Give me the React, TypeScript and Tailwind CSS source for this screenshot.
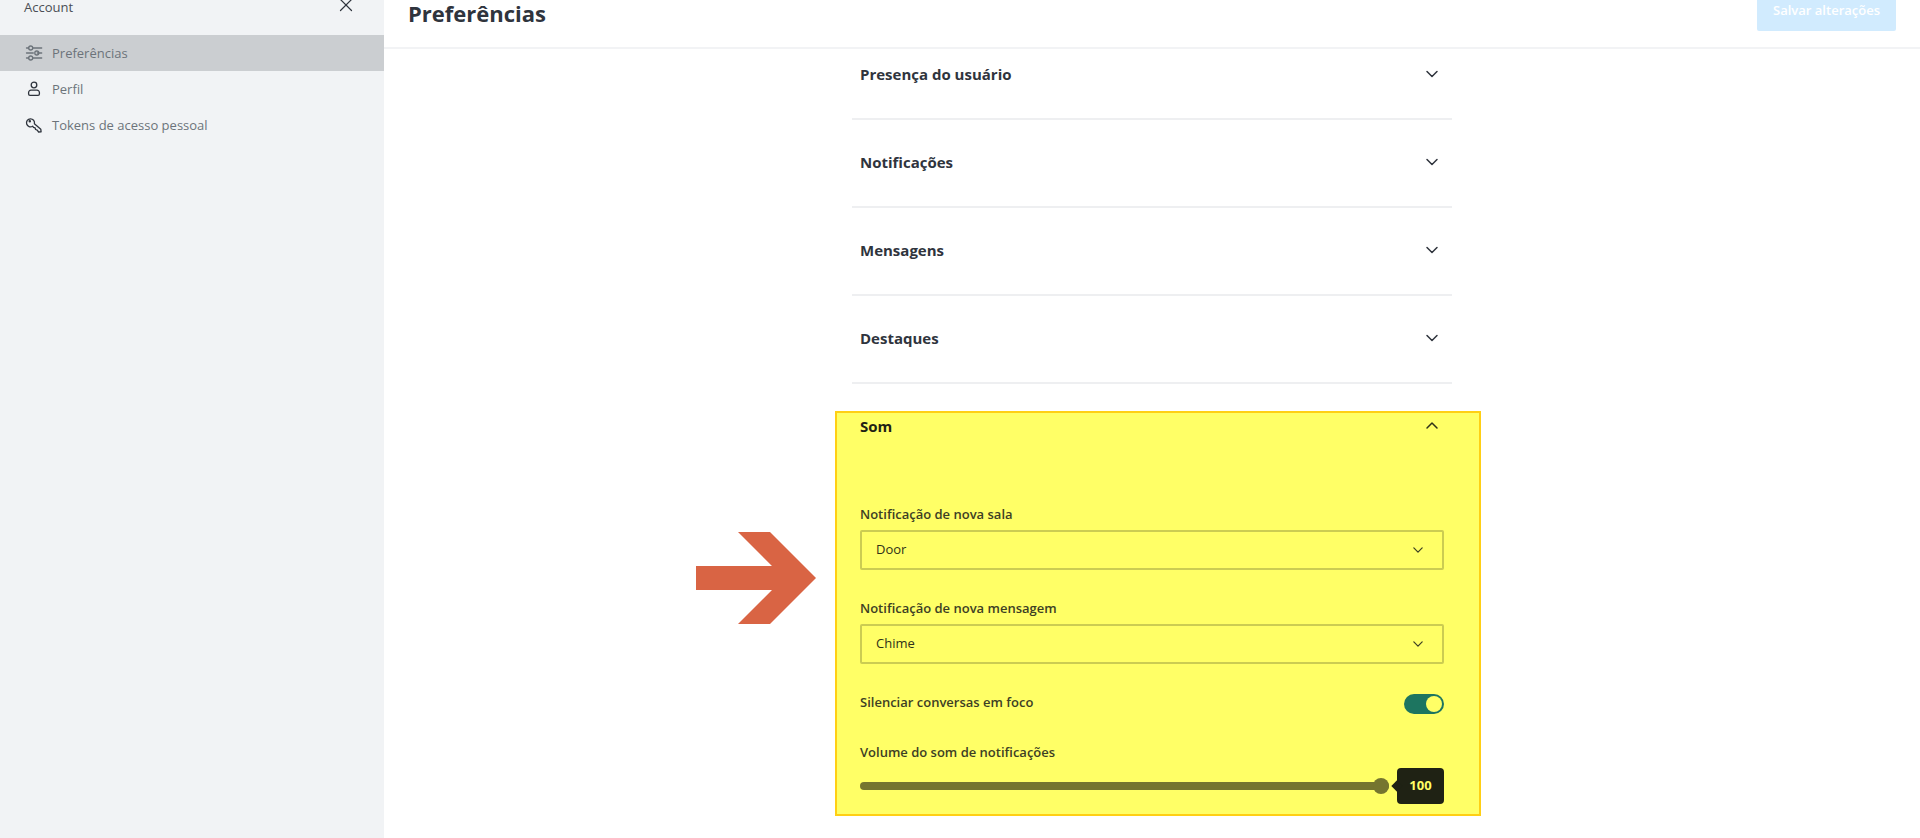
import React, { useState } from 'react';

const NAV = [
    { id: 'preferences', label: 'Preferências', icon: 'sliders' },
    { id: 'profile', label: 'Perfil', icon: 'user' },
    { id: 'tokens', label: 'Tokens de acesso pessoal', icon: 'key' },
] as const;

const SECTIONS = ['Presença do usuário', 'Notificações', 'Mensagens', 'Destaques'];

// ── Icons ──
const NavIcon: React.FC<{ name: 'sliders' | 'user' | 'key' }> = ({ name }) => (
    <svg
        viewBox="0 0 20 20"
        className="size-5 shrink-0"
        fill="none"
        stroke="currentColor"
        strokeWidth="1.3"
        strokeLinecap="round"
        strokeLinejoin="round"
        aria-hidden="true"
    >
        {name === 'sliders' && (
            <>
                <path d="M2.5 5h2.2M8.7 5h9M2.5 10h6.8M13.3 10h4.4M2.5 15h2.2M8.7 15h9" />
                <circle cx="6.7" cy="5" r="2" />
                <circle cx="12.8" cy="10" r="2" />
                <circle cx="6.7" cy="15" r="2" />
            </>
        )}
        {name === 'user' && (
            <>
                <circle cx="10" cy="6" r="2.8" />
                <path d="M7 11.2h6a2.4 2.4 0 0 1 2.4 2.4V15a1.4 1.4 0 0 1-1.4 1.4H6A1.4 1.4 0 0 1 4.6 15v-1.4A2.4 2.4 0 0 1 7 11.2z" />
            </>
        )}
        {name === 'key' && (
            <>
                <path d="M10.4 8.7l6.4 5.6.3 2.6-2.5.1-1.4-1.9-1.6-.6-.5-1.6-1.6-.5-.9-1.2a4 4 0 1 1 1.8-2.5z" />
                <circle cx="5.8" cy="6.2" r="0.6" fill="currentColor" />
            </>
        )}
    </svg>
);

const Chevron: React.FC<{ up?: boolean; className?: string }> = ({ up, className }) => (
    <svg
        viewBox="0 0 24 24"
        className={className}
        fill="none"
        stroke="currentColor"
        strokeWidth="1.5"
        strokeLinecap="round"
        strokeLinejoin="round"
        aria-hidden="true"
    >
        <path d={up ? 'M7 14l5-5 5 5' : 'M7 9.500l5 5 5-5'} />
    </svg>
);

// ── Form pieces ──
const SelectField: React.FC<{ id: string; label: string; options: string[] }> = ({ id, label, options }) => (
    <div className="flex flex-col gap-1.5">
        <label htmlFor={id} className="text-[13px] leading-5 font-semibold text-[#3d4024]">{label}</label>
        <div className="relative">
            <select
                id={id}
                defaultValue={options[0]}
                className="block h-10 w-full appearance-none rounded-xs border-2 border-[#cbcc52] bg-transparent px-3.5 text-[13px] text-[#2f3218]"
            >
                {options.map(o => <option key={o}>{o}</option>)}
            </select>
            <Chevron className="pointer-events-none absolute right-4 top-2.5 size-5 text-[#3d4024]" />
        </div>
    </div>
);

const Sidebar: React.FC = () => (
    <aside className="w-96 shrink-0 bg-[#f1f3f5] text-[13px] leading-5 text-[#6c737a]">
        <div className="flex h-[35px] items-end justify-between px-6 pb-5">
            <span className="leading-4 text-[#4a4e54]">Account</span>
            <button type="button" aria-label="Fechar" className="mr-1 text-[#2f343d]">
                <svg viewBox="0 0 20 20" className="size-5" fill="none" stroke="currentColor" strokeWidth="1.2" strokeLinecap="round">
                    <path d="M4.500 4.500l11 11M15.500 4.500l-11 11" />
                </svg>
            </button>
        </div>
        <nav>
            {NAV.map((item, i) => (
                <a
                    key={item.id}
                    href={`#${item.id}`}
                    className={`flex h-9 items-center gap-2 px-6 ${i === 0 ? 'bg-[#cbced1]' : ''}`}
                >
                    <span className={i === 0 ? 'text-[#6c737a]' : 'text-[#2f343d]'}><NavIcon name={item.icon} /></span>
                    {item.label}
                </a>
            ))}
        </nav>
    </aside>
);

const SoundSection: React.FC = () => {
    const [muted, setMuted] = useState(true);
    const [volume, setVolume] = useState(100);

    return (
        <section className="relative mt-[27px] -ml-[17px] -mr-[29px] border-2 border-[#ffcf14] bg-[#ffff66] pl-[23px] pr-[35px] pt-px pb-2.5">
            <h2>
                <button type="button" aria-expanded="true" className="flex w-full items-center justify-between text-[15px] leading-6 font-bold text-[#1f2214]">
                    Som
                    <Chevron up className="size-6 text-[#2f3218]" />
                </button>
            </h2>

            <div className="mt-[66px] flex flex-col gap-7">
                <SelectField id="new-room" label="Notificação de nova sala" options={['Door', 'Beep', 'Chime']} />
                <SelectField id="new-message" label="Notificação de nova mensagem" options={['Chime', 'Beep', 'Door']} />

                <div className="flex h-[22px] justify-between">
                    <label htmlFor="mute-focused" className="text-[13px] leading-5 font-semibold text-[#3d4024]">Silenciar conversas em foco</label>
                    <input
                        id="mute-focused"
                        type="checkbox"
                        role="switch"
                        checked={muted}
                        onChange={e => setMuted(e.target.checked)}
                        className="h-5 w-10 self-end appearance-none rounded-full bg-[#7a7b31] p-0.5 before:block before:size-4 before:rounded-full before:bg-[#ffff66] checked:bg-[#1d7560] checked:before:ml-5"
                    />
                </div>

                <div className="flex flex-col gap-1.5">
                    <label htmlFor="volume" className="text-[13px] leading-5 font-semibold text-[#3d4024]">Volume do som de notificações</label>
                    <div className="flex items-center gap-2">
                        <input
                            id="volume"
                            type="range"
                            min={0}
                            max={100}
                            value={volume}
                            onChange={e => setVolume(Number(e.target.value))}
                            className="h-2 min-w-0 grow appearance-none rounded-full bg-[#75752f] [&::-webkit-slider-thumb]:size-4 [&::-webkit-slider-thumb]:appearance-none [&::-webkit-slider-thumb]:rounded-full [&::-webkit-slider-thumb]:bg-[#75752f]"
                        />
                        <output
                            htmlFor="volume"
                            className="relative flex h-9 w-[47px] items-center justify-center rounded-sm bg-[#1f2214] text-[13px] font-bold text-[#ffff66]"
                        >
                            <span className="absolute -left-1 top-3.5 size-2 rotate-45 bg-[#1f2214]" />
                            {volume}
                        </output>
                    </div>
                </div>
            </div>

            {/* pointer towards the section */}
            <svg viewBox="0 0 120 92" className="absolute top-[119px] -left-[141px] h-[92px] w-[120px]" aria-hidden="true">
                <path d="M0 34H76L42 0H74L120 46L74 92H42L76 58H0Z" fill="#d96444" />
            </svg>
        </section>
    );
};

const App: React.FC = () => (
    <div className="flex min-h-screen overflow-hidden bg-white font-['Open_Sans','Noto_Sans',sans-serif]">
        <Sidebar />
        <main className="min-w-0 grow">
            <header className="flex h-[49px] items-end justify-between border-b-2 border-[#f2f3f5] px-6 pb-4">
                <h1 className="pb-1.5 text-[22px] leading-6 font-bold text-[#2f343d]">Preferências</h1>
                <button type="button" disabled className="h-10 rounded-xs bg-[#d1ebfe] px-4 text-[13px] font-semibold text-white">
                    Salvar alterações
                </button>
            </header>

            <div className="mx-auto max-w-[600px] pt-[13px]">
                <div className="flex flex-col gap-[30px]">
                    {SECTIONS.map(title => (
                        <h2 key={title} className="border-b-2 border-[#eeeff1] px-2 pb-8">
                            <button type="button" aria-expanded="false" className="flex w-full items-center justify-between text-[15px] leading-6 font-bold text-[#2f343d]">
                                {title}
                                <Chevron className="size-6" />
                            </button>
                        </h2>
                    ))}
                </div>
                <SoundSection />
            </div>
        </main>
    </div>
);

export default App;
